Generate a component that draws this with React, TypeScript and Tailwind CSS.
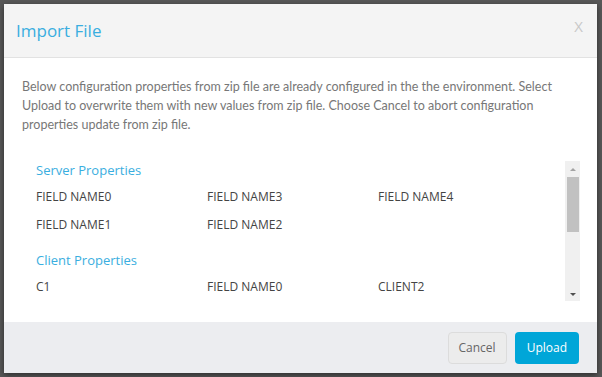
const SECTIONS = [
  { title: "Server Properties", fields: ["FIELD NAME0", "FIELD NAME3", "FIELD NAME4", "FIELD NAME1", "FIELD NAME2"] },
  { title: "Client Properties", fields: ["C1", "FIELD NAME0", "CLIENT2"] },
];

export default function App() {
  return (
    <div className="w-[602px] h-[377px] bg-[#585858] pl-[4px] pt-[4px] font-['Open_Sans',sans-serif] overflow-hidden">
      <div className="w-[593px] h-[369px] bg-white flex flex-col shadow-[0_2px_6px_rgba(0,0,0,0.5)]">
        {/* Header */}
        <div className="h-[54px] bg-[#f4f4f4] border-b border-[#e2e2e2] flex items-center justify-between pl-[12px] pr-[14px]">
          <h2 className="text-[17px] text-[#3aaee0] font-normal">Import File</h2>
          <span className="text-[15px] text-[#c8c8c8] mb-[8px]">X</span>
        </div>

        {/* Body */}
        <div className="flex-1 pl-[18px] pr-[16px] pt-[19px]">
          <p className="text-[12.5px] leading-[19px] text-[#777] font-['Lato',sans-serif]">
            Below configuration properties from zip file are already configured in the the environment. Select Upload to
            overwrite them with new values from zip file. Choose Cancel to abort configuration properties update from zip
            file.
          </p>

          <div className="mt-[27px] h-[140px] mr-[1px] flex">
            <div className="flex-1 overflow-hidden pl-[14px]">
              {SECTIONS.map((s) => (
                <div key={s.title} className="mb-[12px]">
                  <div className="text-[13px] text-[#3aaee0] leading-[18px]">{s.title}</div>
                  <div className="grid grid-cols-[171px_171px_171px] text-[12px] text-[#444] leading-[28px] mt-[4px]">
                    {s.fields.map((f, i) => (
                      <div key={i}>{f}</div>
                    ))}
                  </div>
                </div>
              ))}
            </div>
            <div className="w-[15px] bg-[#f0f0f0] flex flex-col items-center">
              <div className="h-[16px] flex items-center justify-center">
                <div className="w-0 h-0 border-l-[3px] border-r-[3px] border-b-[3px] border-l-transparent border-r-transparent border-b-[#a3a3a3]" />
              </div>
              <div className="w-[12px] h-[55px] bg-[#c1c1c1]" />
              <div className="flex-1" />
              <div className="h-[14px] flex items-center justify-center">
                <div className="w-0 h-0 border-l-[3px] border-r-[3px] border-t-[3px] border-l-transparent border-r-transparent border-t-[#505050]" />
              </div>
            </div>
          </div>
        </div>

        {/* Footer */}
        <div className="h-[51px] bg-[#ecedf0] flex items-center justify-end gap-[8px] pr-[18px]">
          <button className="h-[32px] px-[10px] rounded-[4px] border border-[#dcdcdc] bg-[#ececec] text-[12px] text-[#666]">
            Cancel
          </button>
          <button className="h-[32px] px-[12px] rounded-[4px] bg-[#00a6d8] text-[12px] text-white">Upload</button>
        </div>
      </div>
    </div>
  );
}
